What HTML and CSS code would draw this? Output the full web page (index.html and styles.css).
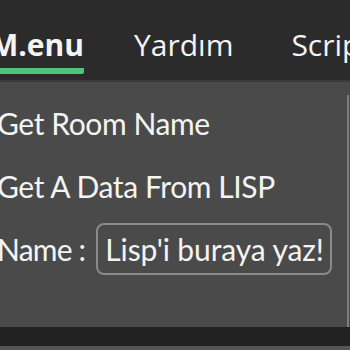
FILE: index.html
```html
<!DOCTYPE html>
<html lang="en">
<head>
    <meta charset="UTF-8">
    <meta name="viewport" content="width=device-width, initial-scale=1.0">
    <title>M.enu</title>
    <link rel="stylesheet" href="styles.css">
</head>
<body>
    <div class="tabs">
        <span class="tab active">M.enu</span>
        <span class="tab">Yardım</span>
        <span class="tab last">Script</span>
    </div>

    <div class="panel">
        <div class="content">
            <div class="row">Get Room Name</div>
            <div class="row">Get A Data From LISP</div>
            <div class="row field">
                <span class="label">Name :</span>
                <span class="input">Lisp'i buraya yaz!</span>
            </div>
        </div>
        <div class="divider"></div>
    </div>

    <div class="footer"></div>
</body>
</html>
```

FILE: styles.css
```css
/* Dark ribbon style panel */
body {
    margin: 0;
    width: 350px;
    height: 350px;
    overflow: hidden;
    background-color: #222;
    color: #f4f4f4;
    font-family: "Lato", "Open Sans", sans-serif;
    font-size: 30px;
}

.tabs {
    display: flex;
    gap: 50px;
    height: 80px;
    background-color: #2b2b2b;
    border-bottom: 2px solid #3a3a3a;
    white-space: nowrap;
    overflow: hidden;
    font-family: "Open Sans", sans-serif;
}

.tab {
    padding-top: 24px;
    line-height: 42px;
}

.tab.active {
    margin-left: -10px;
    font-weight: bold;
    height: 44px;
    border-bottom: 6px solid #4fc47c;
    border-radius: 2px;
}

.tab.last {
    margin-left: 8px;
}

.panel {
    display: flex;
    height: 245px;
    background-color: #4a4a4a;
}

.content {
    flex: 1;
    margin-left: -3px;
    padding-top: 9px;
    letter-spacing: -0.4px;
}

.row {
    height: 63px;
    display: flex;
    align-items: center;
    white-space: nowrap;
}

.field {
    gap: 11px;
}

.label {
    letter-spacing: -0.8px;
}

.input {
    border: 2px solid #8a8a8a;
    border-radius: 8px;
    padding: 0 6px 0 7px;
    height: 48px;
    line-height: 48px;
    letter-spacing: -0.1px;
}

.divider {
    width: 2px;
    margin: 13px 1px 0 0;
    background-color: #7d7d7d;
}

.footer {
    height: 19px;
    background-color: #222;
    border-bottom: 4px solid #555;
}
```
